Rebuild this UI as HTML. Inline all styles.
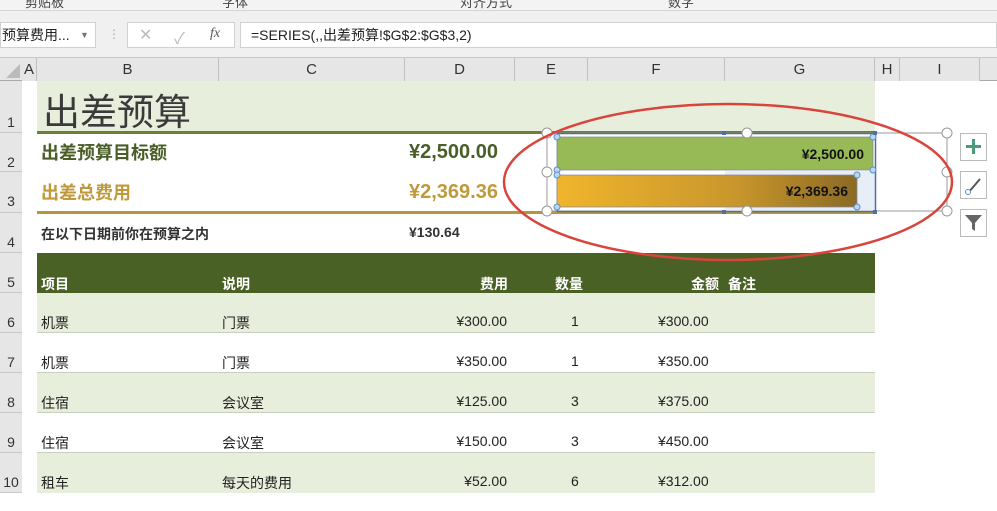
<!DOCTYPE html>
<html><head><meta charset="utf-8"><style>
*{margin:0;padding:0;box-sizing:border-box}
body{width:997px;height:490px;overflow:hidden;background:#fff;position:relative;font-family:"Liberation Sans","Noto Sans CJK SC",sans-serif;color:#222}
.a{position:absolute;white-space:nowrap}
.rh{position:absolute;left:0;width:22px;background:#e6e6e6;border-bottom:1px solid #c8c8c8;font-size:14px;color:#333;text-align:center}
.ch{position:absolute;top:58px;height:23px;background:#e6e6e6;border-right:1px solid #c0c0c0;font-size:15px;color:#333;text-align:center;line-height:23px}
.t{position:absolute;font-size:14px;color:#222;white-space:nowrap}
.r{text-align:right}
</style></head><body>
<div class="a" style="left:0;top:0;width:997px;height:11px;background:#f3f3f3;border-bottom:1px solid #d4d4d4"></div>
<div class="a" style="left:25px;top:-8px;font-size:13px;color:#444">剪贴板</div>
<div class="a" style="left:222px;top:-8px;font-size:13px;color:#444">字体</div>
<div class="a" style="left:460px;top:-8px;font-size:13px;color:#444">对齐方式</div>
<div class="a" style="left:668px;top:-8px;font-size:13px;color:#444">数字</div>
<div class="a" style="left:0;top:11px;width:997px;height:47px;background:#f0f0f0;border-bottom:1px solid #c8c8c8"></div>
<div class="a" style="left:0;top:22px;width:96px;height:26px;background:#fff;border:1px solid #d0d0d0;font-size:14px;line-height:24px;padding-left:1px">预算费用...</div>
<div class="a" style="left:80px;top:30px;font-size:9px;color:#777">▼</div>
<div class="a" style="left:108px;top:27px;font-size:12px;color:#aaa">⋮</div>
<div class="a" style="left:127px;top:22px;width:108px;height:26px;background:#fff;border:1px solid #d0d0d0"></div>
<div class="a" style="left:139px;top:25px;font-size:16px;color:#bbb">✕</div>
<div class="a" style="left:174px;top:25px;font-size:16px;color:#bbb">✓</div>
<div class="a" style="left:210px;top:26px;font-size:14px;font-style:italic;font-family:'Liberation Serif',serif;color:#555">fx</div>
<div class="a" style="left:240px;top:22px;width:757px;height:26px;background:#fff;border:1px solid #d0d0d0;font-size:14px;line-height:24px;padding-left:10px">=SERIES(,,出差预算!$G$2:$G$3,2)</div>
<div class="a" style="left:0;top:58px;width:997px;height:23px;background:#e6e6e6;border-bottom:1px solid #aaa"></div>
<div class="a" style="left:6px;top:64px;width:0;height:0;border-left:14px solid transparent;border-bottom:14px solid #bbb"></div>
<div class="ch" style="left:22px;width:15px">A</div>
<div class="ch" style="left:37px;width:182px">B</div>
<div class="ch" style="left:219px;width:186px">C</div>
<div class="ch" style="left:405px;width:110px">D</div>
<div class="ch" style="left:515px;width:73px">E</div>
<div class="ch" style="left:588px;width:137px">F</div>
<div class="ch" style="left:725px;width:150px">G</div>
<div class="ch" style="left:875px;width:25px">H</div>
<div class="ch" style="left:900px;width:80px">I</div>
<div class="a" style="left:0;top:81px;width:22px;height:409px;background:#e6e6e6;border-right:1px solid #bbb"></div>
<div class="rh" style="top:81px;height:52px;line-height:82px">1</div>
<div class="rh" style="top:133px;height:39px;line-height:58px">2</div>
<div class="rh" style="top:172px;height:41px;line-height:58px">3</div>
<div class="rh" style="top:213px;height:40px;line-height:58px">4</div>
<div class="rh" style="top:253px;height:40px;line-height:58px">5</div>
<div class="rh" style="top:293px;height:40px;line-height:58px">6</div>
<div class="rh" style="top:333px;height:40px;line-height:58px">7</div>
<div class="rh" style="top:373px;height:40px;line-height:58px">8</div>
<div class="rh" style="top:413px;height:40px;line-height:58px">9</div>
<div class="rh" style="top:453px;height:40px;line-height:58px">10</div>
<div class="a" style="left:37px;top:81px;width:838px;height:52px;background:#e8eedc"></div>
<div class="a" style="left:43px;top:82px;font-size:37px;color:#3a3a3a">出差预算</div>
<div class="a" style="left:37px;top:131px;width:838px;height:3px;background:#6b7f3a"></div>
<div class="a" style="left:41px;top:139px;font-size:18px;font-weight:bold;color:#4a5f28">出差预算目标额</div>
<div class="a" style="left:409px;top:141px;font-size:20px;font-weight:bold;color:#4a5f28">¥2,500.00</div>
<div class="a" style="left:41px;top:179px;font-size:18px;font-weight:bold;color:#c09a3a">出差总费用</div>
<div class="a" style="left:409px;top:181px;font-size:20px;font-weight:bold;color:#c09a3a">¥2,369.36</div>
<div class="a" style="left:37px;top:211px;width:838px;height:3px;background:#b8953a"></div>
<div class="a" style="left:41px;top:224px;font-size:14px;font-weight:bold;color:#333">在以下日期前你在预算之内</div>
<div class="a" style="left:409px;top:224px;font-size:14px;font-weight:bold;color:#333">¥130.64</div>
<div class="a" style="left:37px;top:253px;width:838px;height:40px;background:#4a6126"></div>
<div class="t" style="left:41px;top:274px;color:#fff;font-weight:bold">项目</div>
<div class="t" style="left:222px;top:274px;color:#fff;font-weight:bold">说明</div>
<div class="t" style="left:480px;top:274px;color:#fff;font-weight:bold">费用</div>
<div class="t" style="left:555px;top:274px;color:#fff;font-weight:bold">数量</div>
<div class="t" style="left:691px;top:274px;color:#fff;font-weight:bold">金额</div>
<div class="t" style="left:728px;top:274px;color:#fff;font-weight:bold">备注</div>
<div class="a" style="left:37px;top:293px;width:838px;height:40px;background:#e8eedc;border-bottom:1px solid #c9cfbd"></div>
<div class="a" style="left:37px;top:333px;width:838px;height:40px;background:#fff;border-bottom:1px solid #c9cfbd"></div>
<div class="a" style="left:37px;top:373px;width:838px;height:40px;background:#e8eedc;border-bottom:1px solid #c9cfbd"></div>
<div class="a" style="left:37px;top:413px;width:838px;height:40px;background:#fff;border-bottom:1px solid #c9cfbd"></div>
<div class="a" style="left:37px;top:453px;width:838px;height:40px;background:#e8eedc"></div>
<div class="t" style="left:41px;top:313px">机票</div><div class="t" style="left:222px;top:313px">门票</div><div class="t r" style="left:400px;width:107px;top:313px">¥300.00</div><div class="t" style="left:571px;top:313px">1</div><div class="t" style="left:658px;top:313px">¥300.00</div>
<div class="t" style="left:41px;top:353px">机票</div><div class="t" style="left:222px;top:353px">门票</div><div class="t r" style="left:400px;width:107px;top:353px">¥350.00</div><div class="t" style="left:571px;top:353px">1</div><div class="t" style="left:658px;top:353px">¥350.00</div>
<div class="t" style="left:41px;top:393px">住宿</div><div class="t" style="left:222px;top:393px">会议室</div><div class="t r" style="left:400px;width:107px;top:393px">¥125.00</div><div class="t" style="left:571px;top:393px">3</div><div class="t" style="left:658px;top:393px">¥375.00</div>
<div class="t" style="left:41px;top:433px">住宿</div><div class="t" style="left:222px;top:433px">会议室</div><div class="t r" style="left:400px;width:107px;top:433px">¥150.00</div><div class="t" style="left:571px;top:433px">3</div><div class="t" style="left:658px;top:433px">¥450.00</div>
<div class="t" style="left:41px;top:473px">租车</div><div class="t" style="left:222px;top:473px">每天的费用</div><div class="t r" style="left:400px;width:107px;top:473px">¥52.00</div><div class="t" style="left:571px;top:473px">6</div><div class="t" style="left:658px;top:473px">¥312.00</div>
<svg class="a" style="left:0;top:0" width="997" height="490">
<defs><linearGradient id="g" x1="0" x2="1"><stop offset="0" stop-color="#f0b52c"/><stop offset="0.6" stop-color="#c8962c"/><stop offset="1" stop-color="#8a6a24"/></linearGradient></defs>
<rect x="547" y="133" width="400" height="78" fill="#fff" fill-opacity="0.9" stroke="#999" stroke-width="1"/>
<rect x="725" y="171" width="150" height="41" fill="#e8eef8"/>
<rect x="557.5" y="133.5" width="318" height="78" fill="none" stroke="#4f6f9f" stroke-width="1.5"/>
<rect x="557" y="137" width="316" height="33" rx="2" fill="#97ba56" stroke="#889" stroke-width="0.8"/>
<rect x="557" y="175" width="300" height="32" rx="2" fill="url(#g)" stroke="#889" stroke-width="0.8"/>
<text x="864" y="159" text-anchor="end" font-family="Liberation Sans" font-weight="bold" font-size="14" fill="#111">¥2,500.00</text>
<text x="848" y="196" text-anchor="end" font-family="Liberation Sans" font-weight="bold" font-size="14" fill="#111">¥2,369.36</text>
<g fill="#fff" stroke="#999" stroke-width="1">
<circle cx="547" cy="133" r="5"/><circle cx="747" cy="133" r="5"/><circle cx="947" cy="133" r="5"/>
<circle cx="547" cy="172" r="5"/><circle cx="947" cy="172" r="5"/>
<circle cx="547" cy="211" r="5"/><circle cx="747" cy="211" r="5"/><circle cx="947" cy="211" r="5"/>
</g>
<g fill="#bcd7f2" stroke="#5b8fc7" stroke-width="1">
<circle cx="557" cy="137" r="3"/><circle cx="873" cy="137" r="3"/><circle cx="557" cy="170" r="3"/><circle cx="873" cy="170" r="3"/>
<circle cx="557" cy="175" r="3"/><circle cx="857" cy="175" r="3"/><circle cx="557" cy="207" r="3"/><circle cx="857" cy="207" r="3"/>
</g>
<g fill="#4f6f9f"><rect x="722" y="131" width="4" height="4"/><rect x="873" y="131" width="4" height="4"/><rect x="722" y="210" width="4" height="4"/><rect x="873" y="210" width="4" height="4"/></g>
<ellipse cx="728" cy="182" rx="224" ry="78" fill="none" stroke="#d9453c" stroke-width="2.5"/>
<g fill="#fff" stroke="#bbb"><rect x="960.5" y="133.5" width="26" height="27"/><rect x="960.5" y="171.5" width="26" height="27"/><rect x="960.5" y="209.5" width="26" height="27"/></g>
<path d="M973.5 139v15M966 146.5h15" stroke="#4b9a7a" stroke-width="3"/>
<path d="M968 193l12-14" stroke="#555" stroke-width="2"/><circle cx="968" cy="192" r="2.5" fill="#fff" stroke="#5b8fc7"/>
<path d="M965 215h17l-7 8v8l-3 -2v-6z" fill="#666"/>
</svg>
</body></html>
